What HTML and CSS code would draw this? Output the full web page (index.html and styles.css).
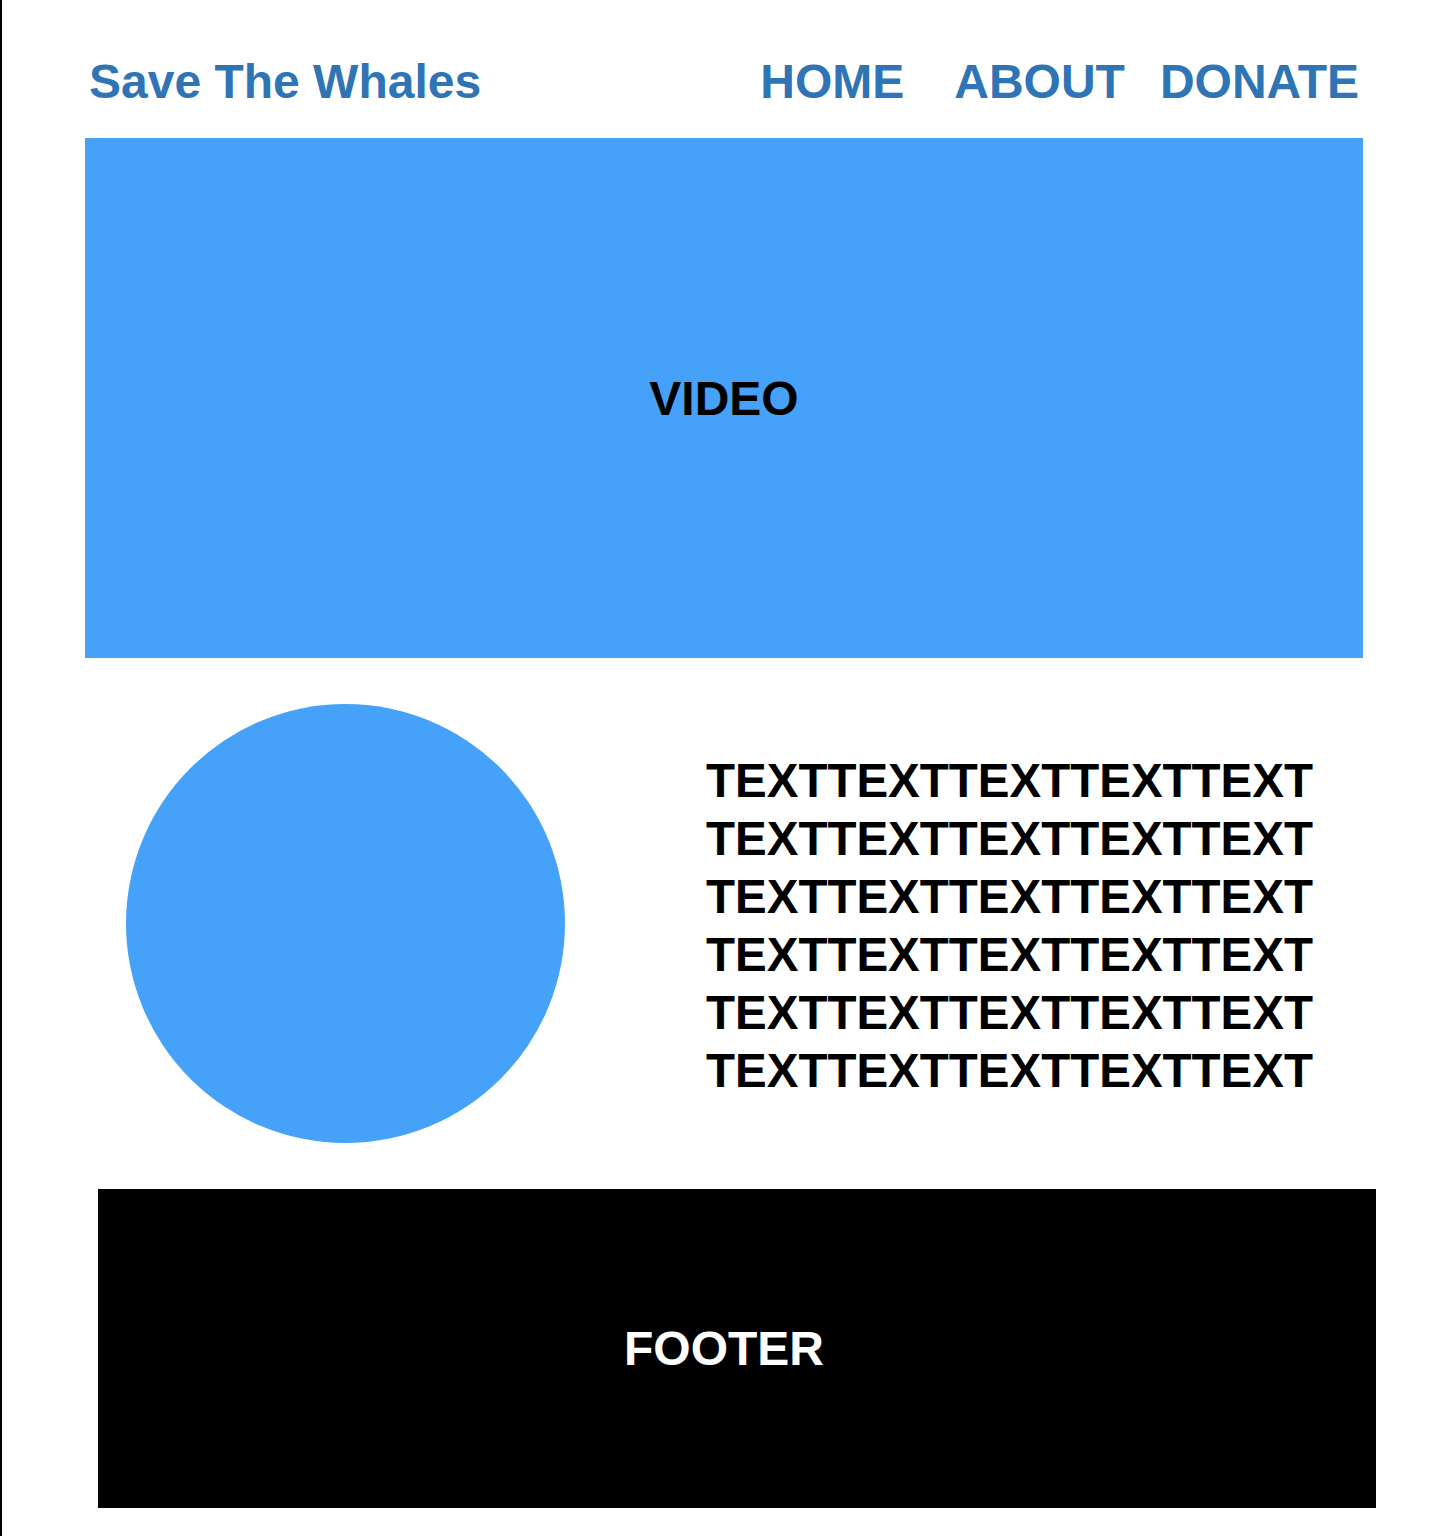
FILE: index.html
```html
<!DOCTYPE html>
<html lang="en">
<head>
<meta charset="utf-8">
<title>Save The Whales</title>
<link rel="stylesheet" href="styles.css">
</head>
<body>
<div class="page">
  <header class="header">
    <div class="logo">Save The Whales</div>
    <nav class="nav">
      <a class="nav-link nav-home" href="#">HOME</a>
      <a class="nav-link" href="#">ABOUT</a>
      <a class="nav-link" href="#">DONATE</a>
    </nav>
  </header>
  <section class="video">VIDEO</section>
  <section class="feature">
    <div class="circle"></div>
    <div class="copy">
      <div>TEXTTEXTTEXTTEXTTEXT</div>
      <div>TEXTTEXTTEXTTEXTTEXT</div>
      <div>TEXTTEXTTEXTTEXTTEXT</div>
      <div>TEXTTEXTTEXTTEXTTEXT</div>
      <div>TEXTTEXTTEXTTEXTTEXT</div>
      <div>TEXTTEXTTEXTTEXTTEXT</div>
    </div>
  </section>
  <footer class="footer">FOOTER</footer>
</div>
</body>
</html>
```

FILE: styles.css
```css
html, body {
  margin: 0;
  padding: 0;
  background: #ffffff;
}

body {
  font-family: "Liberation Sans", Arial, Helvetica, sans-serif;
  font-weight: bold;
  font-size: 48px;
}

.page {
  border-left: 2px solid #000000;
  min-height: 1536px;
  box-sizing: border-box;
  padding-left: 83px;
  width: 1442px;
}

.header {
  width: 1278px;
  box-sizing: border-box;
  display: flex;
  justify-content: space-between;
  align-items: center;
  padding: 55px 4px 29px 4px;
  line-height: 54px;
  color: #2f74b4;
}

.logo {
  color: #2f74b4;
}

.nav {
  display: flex;
  gap: 35px;
}

.nav-link {
  color: #2f74b4;
  text-decoration: none;
}

.nav-home {
  margin-right: 15px;
}

.video {
  width: 1278px;
  height: 520px;
  background: #45a2f8;
  color: #000000;
  display: flex;
  align-items: center;
  justify-content: center;
}

.feature {
  width: 1278px;
  display: flex;
  align-items: center;
  padding: 46px 0;
}

.circle {
  width: 439px;
  height: 439px;
  border-radius: 50%;
  background: #45a2f8;
  margin-left: 41px;
  flex: none;
}

.copy {
  margin-left: 141px;
  font-size: 47.5px;
  line-height: 58px;
  color: #000000;
  margin-top: 4px;
}

.footer {
  width: 1278px;
  height: 319px;
  margin-left: 13px;
  box-sizing: border-box;
  padding-right: 26px;
  background: #000000;
  color: #ffffff;
  display: flex;
  align-items: center;
  justify-content: center;
}
```
